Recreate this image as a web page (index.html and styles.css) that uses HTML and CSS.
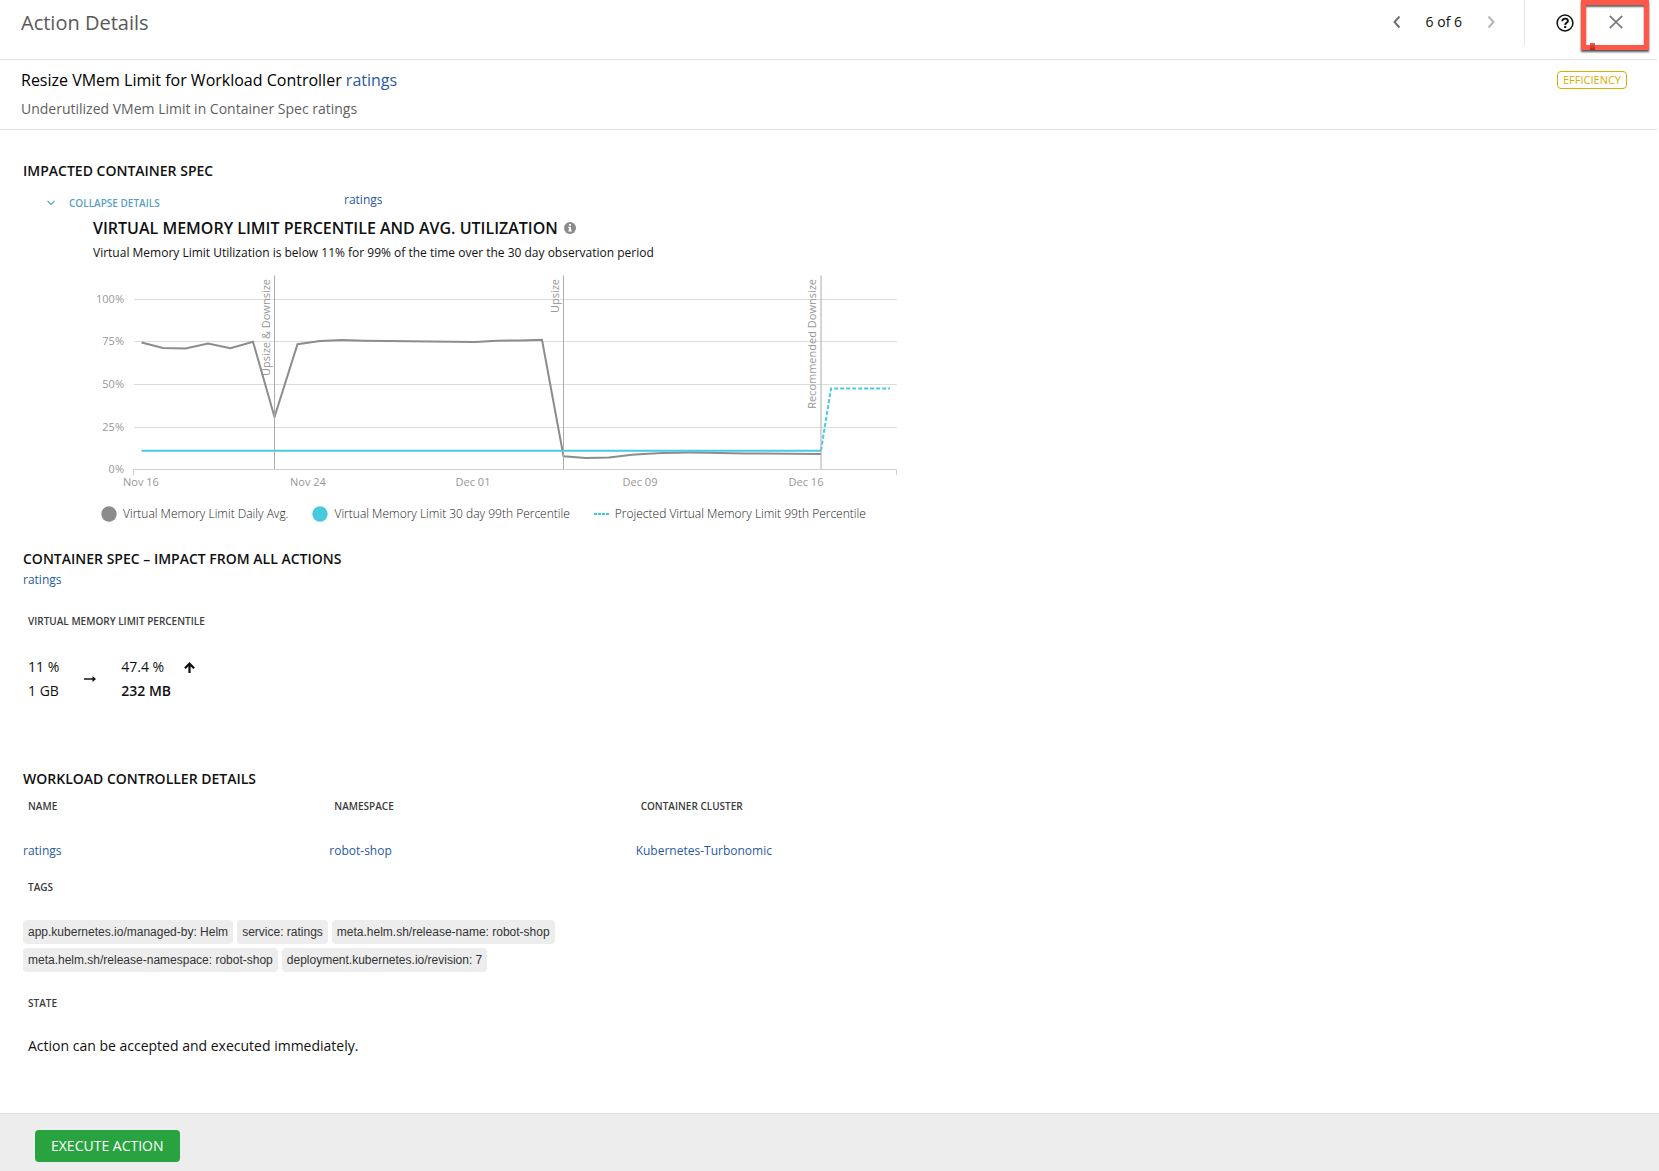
FILE: index.html
```html
<!DOCTYPE html>
<html lang="en">
<head>
<meta charset="utf-8">
<meta name="viewport" content="width=device-width, initial-scale=1">
<title>Action Details</title>
<link rel="stylesheet" href="styles.css">
</head>
<body>
<header class="topbar">
  <h1 class="topbar-title">Action Details</h1>
  <nav class="pager" aria-label="Actions">
    <button class="icon-button" type="button" aria-label="Previous action">
      <svg width="8" height="14" viewBox="0 0 8 14"><path d="M6.5 1.5 1.5 7l5 5.500" fill="none" stroke="#6e6e6e" stroke-width="1.900"/></svg>
    </button>
    <span class="pager-count">6 of 6</span>
    <button class="icon-button" type="button" aria-label="Next action" disabled>
      <svg width="8" height="14" viewBox="0 0 8 14"><path d="M1.500 1.500 6.500 7l-5 5.500" fill="none" stroke="#b4b4b4" stroke-width="1.900"/></svg>
    </button>
  </nav>
  <button class="icon-button help" type="button" aria-label="Help">
    <svg width="18" height="18" viewBox="0 0 18 18" fill="none" stroke="#111">
      <circle cx="9" cy="9" r="7.900" stroke-width="1.500"/>
      <path d="M6.300 7.300C6.300 5.600 7.500 4.600 9.100 4.600c1.700 0 2.800.9 2.800 2.300 0 1.900-2.700 2-2.700 4" stroke-width="1.900"/>
      <path d="M9.200 12v2" stroke-width="2.100"/>
    </svg>
  </button>
  <button class="icon-button close" type="button" aria-label="Close">
    <svg width="14" height="14" viewBox="0 0 14 14"><path d="M.8.8l12.400 12.400M13.200.8.8 13.200" stroke="#7a7a7a" stroke-width="1.700"/></svg>
  </button>
</header>

<section class="summary">
  <div class="summary-text">
    <h2 class="summary-title">Resize VMem Limit for Workload Controller <a href="#ratings">ratings</a></h2>
    <p class="summary-reason">Underutilized VMem Limit in Container Spec ratings</p>
  </div>
  <span class="badge">EFFICIENCY</span>
</section>

<main class="content">
  <section class="impacted">
    <h3 class="section-title">IMPACTED CONTAINER SPEC</h3>
    <div class="spec-row">
      <button class="collapse" type="button" aria-expanded="true">
        <svg width="8" height="6" viewBox="0 0 8 6"><path d="M.5.8 4 4.700 7.500.8" fill="none" stroke="#5a9fc6" stroke-width="1.200"/></svg>
        COLLAPSE DETAILS
      </button>
      <a class="link" href="#ratings">ratings</a>
    </div>
    <div class="chart">
      <h4 class="chart-title">VIRTUAL MEMORY LIMIT PERCENTILE AND AVG. UTILIZATION
        <svg width="12" height="12" viewBox="0 0 12 12"><circle cx="6" cy="6" r="6" fill="#8a8a8a"/><path d="M5 2h2v1.700H5zM4.300 4.700H7v3.600h.8v1.200H4.300V8.300H5V5.900h-.7z" fill="#fff"/></svg>
      </h4>
      <p class="chart-note">Virtual Memory Limit Utilization is below 11% for 99% of the time over the 30 day observation period</p>
      <svg class="plot" width="810" height="225" viewBox="0 0 810 225" role="img" aria-label="Virtual memory limit utilization over time">
        <path class="grid" d="M41 29.500H804M41 71.500H804M41 114.500H804M41 157.500H804"/>
        <path class="axis" d="M40.500 205V199.500H803.500V205"/>
        <g class="tick tick-y">
          <text x="31" y="33">100%</text><text x="31" y="75">75%</text><text x="31" y="118">50%</text><text x="31" y="161">25%</text><text x="31" y="203">0%</text>
        </g>
        <g class="tick tick-x">
          <text x="48" y="216">Nov 16</text><text x="215" y="216">Nov 24</text><text x="380" y="216">Dec 01</text><text x="547" y="216">Dec 09</text><text x="713" y="216">Dec 16</text>
        </g>
        <g class="tick tick-event">
          <text transform="translate(177 9) rotate(-90)">Upsize &amp; Downsize</text>
          <text transform="translate(466 9) rotate(-90)">Upsize</text>
          <text transform="translate(723 9) rotate(-90)">Recommended Downsize</text>
        </g>
        <path class="average" d="M48.500 72.500 70 78l22.500.5L115 73.500 137.500 78.200 160 71.700 181.500 147 204.500 74.200 227 71 249 70 271 70.700 382 72 404 70.700 427 70.400 449 69.700 470.500 186.300 493 188 516 187.500 539 184.700C560 183.300 575 182.500 595 182.500S640 183.400 660 183.400L728 184"/>
        <path class="percentile" d="M48.500 180.700H728"/>
        <path class="projected" d="M728 180.500 738 118.500H797"/>
        <path class="event" d="M181.500 5.500V199M470.500 5.500V199M728 5.500V199"/>
      </svg>
      <ul class="legend">
        <li><svg width="16" height="16" viewBox="0 0 16 16"><circle cx="8" cy="8" r="7.700" fill="#8c8c8c"/></svg>Virtual Memory Limit Daily Avg.</li>
        <li><svg width="16" height="16" viewBox="0 0 16 16"><circle cx="8" cy="8" r="7.700" fill="#48cade"/></svg>Virtual Memory Limit 30 day 99th Percentile</li>
        <li><svg width="15" height="16" viewBox="0 0 15 16"><path d="M0 8h15" stroke="#3cc8dc" stroke-width="2" stroke-dasharray="3 1"/></svg>Projected Virtual Memory Limit 99th Percentile</li>
      </ul>
    </div>
  </section>

  <section class="impact">
    <h3 class="section-title">CONTAINER SPEC – IMPACT FROM ALL ACTIONS</h3>
    <a class="link" href="#ratings">ratings</a>
    <h4 class="label">VIRTUAL MEMORY LIMIT PERCENTILE</h4>
    <div class="change">
      <div class="change-value"><span>11 %</span><span>1 GB</span></div>
      <svg class="change-arrow" width="12" height="6" viewBox="0 0 12 6"><path d="M0 3h9" stroke="#111" stroke-width="1.500"/><path d="M8.500 0 12 3 8.500 6z" fill="#111"/></svg>
      <div class="change-value">
        <span class="trend">47.4 %
          <svg width="11" height="11" viewBox="0 0 11 11" fill="none" stroke="#111" stroke-width="2.200"><path d="M5.500 11V1.500M.9 6.200 5.500 1.600 10.100 6.200"/></svg>
        </span>
        <strong>232 MB</strong>
      </div>
    </div>
  </section>

  <section class="details">
    <h3 class="section-title">WORKLOAD CONTROLLER DETAILS</h3>
    <table class="facts">
      <thead><tr><th scope="col">NAME</th><th scope="col">NAMESPACE</th><th scope="col">CONTAINER CLUSTER</th></tr></thead>
      <tbody><tr>
        <td><a class="link" href="#ratings">ratings</a></td>
        <td><a class="link" href="#robot-shop">robot-shop</a></td>
        <td><a class="link" href="#cluster">Kubernetes-Turbonomic</a></td>
      </tr></tbody>
    </table>
    <h4 class="label">TAGS</h4>
    <ul class="tags">
      <li>app.kubernetes.io/managed-by: Helm</li>
      <li>service: ratings</li>
      <li>meta.helm.sh/release-name: robot-shop</li>
      <li>meta.helm.sh/release-namespace: robot-shop</li>
      <li>deployment.kubernetes.io/revision: 7</li>
    </ul>
    <h4 class="label">STATE</h4>
    <p class="state">Action can be accepted and executed immediately.</p>
  </section>
</main>

<footer class="actions">
  <button class="execute" type="button">EXECUTE ACTION</button>
</footer>
</body>
</html>
```
FILE: styles.css
```css
* { box-sizing: border-box; }

body {
  display: flex;
  flex-direction: column;
  min-height: 100vh;
  margin: 0;
  background: #fff;
  color: #111;
  font: 14px/20px "Open Sans", "Noto Sans", sans-serif;
}

h1, h2, h3, h4, p, ul { margin: 0; padding: 0; font-weight: 400; }
ul { list-style: none; }
svg { display: block; flex: none; }
a { color: #2a5a9e; text-decoration: none; }

button {
  margin: 0;
  padding: 0;
  border: 0;
  background: none;
  font: inherit;
  cursor: pointer;
}

.topbar {
  display: flex;
  align-items: flex-start;
  height: 60px;
  padding: 0 8px 0 21px;
  margin-right: 2px;
  border-bottom: 1px solid #e2e2e2;
}

.topbar-title {
  flex: 1;
  color: #595959;
  font-size: 20px;
  line-height: 46px;
}

.icon-button {
  display: flex;
  align-items: center;
  justify-content: center;
  height: 44px;
}

.pager {
  display: flex;
  align-items: center;
  gap: 25px;
  height: 46px;
  padding: 0 29px 2px 0;
  border-right: 1px solid #e6e6e6;
}

.help { width: 56px; height: 46px; padding-left: 24px; }

/* Highlighted close control */
.close {
  position: relative;
  width: 68px;
  height: 50px;
  padding: 0 0 6px 2px;
  border: 5px solid #ff584b;
  box-shadow: 0 2px 2px #555, inset 0 2px 2px #666;
}

.close::after {
  content: "";
  position: absolute;
  left: 4px;
  bottom: -5px;
  width: 5px;
  height: 7px;
  background: linear-gradient(#ff584b, #a02a22);
}

.summary {
  display: flex;
  align-items: flex-start;
  justify-content: space-between;
  height: 70px;
  padding: 8px 30px 0 21px;
  margin-right: 2px;
  border-bottom: 1px solid #e2e2e2;
}

.summary-title { color: #000; font-size: 16px; line-height: 24px; }
.summary-reason { margin-top: 7px; color: #5f5f5f; }

.badge {
  margin-top: 3px;
  padding: 0 5px;
  border: 1px solid #d8ae00;
  border-radius: 4px;
  color: #d8ae00;
  font-size: 11px;
  line-height: 16px;
}

.content { flex: 1; padding: 31px 23px 40px; }
.section-title { font-size: 14px; font-weight: 600; line-height: 20px; }
.link { font-size: 12px; line-height: 20px; }

.spec-row {
  display: grid;
  grid-template-columns: 297px 1fr;
  align-items: start;
  padding: 9px 0 0 24px;
}

.collapse {
  display: flex;
  align-items: center;
  gap: 14px;
  padding-top: 3px;
  color: #5a9fc6;
  font-size: 10px;
  font-weight: 600;
}

.chart { padding-left: 70px; }

.chart-title {
  display: flex;
  align-items: center;
  gap: 6px;
  margin-top: 3px;
  font-size: 16px;
  font-weight: 600;
  line-height: 24px;
}

.chart-note { margin-top: 3px; font-size: 12px; }
.plot { max-width: 100%; margin-top: 7px; }
.grid, .axis, .event, .average, .percentile, .projected { fill: none; }
.grid { stroke: #dcdcdc; }
.axis { stroke: #d0d0d0; }
.event { stroke: #acacac; }
.average { stroke: #8c8c8c; stroke-width: 2; }
.percentile { stroke: #48cade; stroke-width: 2; }
.projected { stroke: #48cade; stroke-width: 2; stroke-dasharray: 4 2; }
.tick { fill: #979797; font-size: 11px; }
.tick-x { text-anchor: middle; }
.tick-y, .tick-event { text-anchor: end; }

.legend {
  display: flex;
  flex-wrap: wrap;
  gap: 24px;
  padding: 9px 0 0 8px;
  color: #222;
  font-size: 12px;
  font-weight: 300;
}

.legend li { display: flex; align-items: center; gap: 6px; }

.impact { margin-top: 25px; }
.impact .link { display: block; margin-top: 1px; }
.label { padding-left: 5px; color: #3c3c3c; font-size: 10px; font-weight: 600; }
.impact .label { margin-top: 21px; }

.change {
  display: flex;
  align-items: center;
  gap: 25px;
  padding: 24px 0 0 5px;
}

.change-value { display: grid; line-height: 24px; }
.change-value strong { font-weight: 600; }
.trend { display: flex; align-items: center; gap: 20px; }

.details { margin-top: 66px; }
.facts { width: 919px; max-width: 100%; table-layout: fixed; border-collapse: collapse; }
.facts th { padding: 7px 5px 0; color: #3c3c3c; font-size: 10px; font-weight: 600; text-align: left; }
.facts td { padding: 24px 0 16px; line-height: 20px; }

.tags {
  display: flex;
  flex-wrap: wrap;
  gap: 4px;
  max-width: 560px;
  padding: 23px 0 21px;
  color: #333;
  font: 12px/24px "Liberation Sans", Arial, sans-serif;
}

.tags li { padding: 0 5px; border-radius: 4px; background: #ededed; }
.state { padding: 23px 5px 0; }

.actions {
  padding: 16px 35px 9px;
  border-top: 1px solid #e0e0e0;
  background: #ededed;
}

.execute {
  padding: 0 16px;
  border-radius: 4px;
  background: #29a33f;
  color: #fff;
  line-height: 32px;
}
```
